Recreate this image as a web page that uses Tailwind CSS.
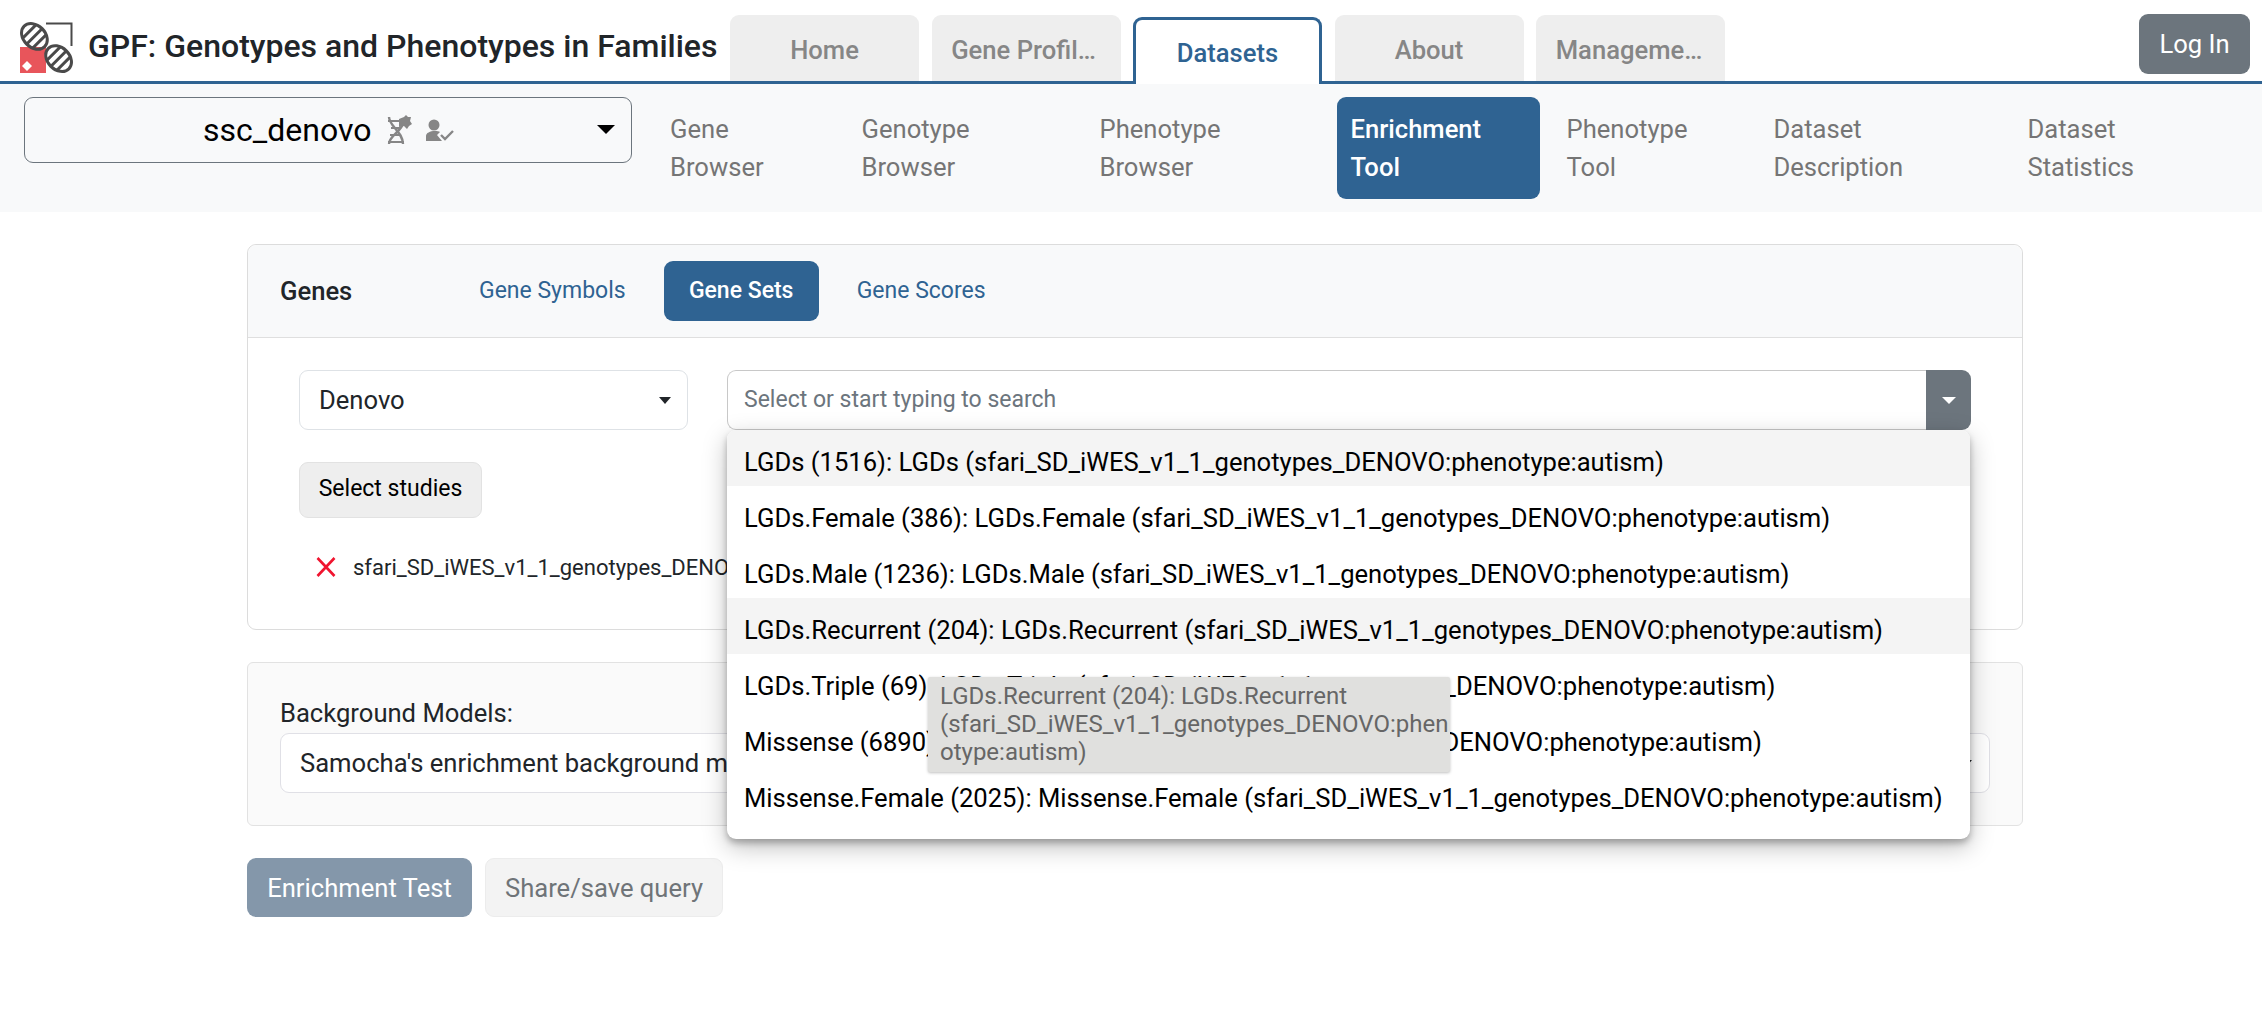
<!DOCTYPE html>
<html lang="en">
    <head>
        <meta charset="UTF-8" />
        <title>GPF: Genotypes and Phenotypes in Families</title>
        <script src="https://cdn.jsdelivr.net/npm/@tailwindcss/browser@4"></script>
    </head>
    <body class="bg-white font-['Roboto',sans-serif] text-[25.6px] text-[#212529] overflow-hidden h-[1026px]">
        <!-- top bar -->
        <header class="flex items-end h-[84px] border-b-[3px] border-[#2f6392]">
            <svg class="ml-[20px] mb-[8px] w-[53px] h-[51px] shrink-0" viewBox="0 0 53 51">
                <defs>
                    <clipPath id="lensA"><ellipse cx="14.400" cy="14.400" rx="14.500" ry="11" transform="rotate(45 14.400 14.400)" /></clipPath>
                    <clipPath id="lensB"><ellipse cx="38.600" cy="36.600" rx="14.500" ry="11" transform="rotate(45 38.600 36.600)" /></clipPath>
                </defs>
                <path d="M26 1.500h25.500V24" fill="none" stroke="#4a4a4a" stroke-width="2" />
                <rect x="0" y="25" width="26" height="26" fill="#e8555b" />
                <path d="M7 39l5 5-5 5-5-5z" fill="#fff" />
                <ellipse cx="38.600" cy="36.600" rx="15.500" ry="12" transform="rotate(45 38.600 36.600)" fill="#fff" />
                <g clip-path="url(#lensA)" stroke="#4a4a4a" stroke-width="3">
                    <path d="M-2 20.800L20.800 -2M3 25.800L25.800 3M8 30.800L30.800 8" />
                </g>
                <ellipse cx="14.400" cy="14.400" rx="14.500" ry="11" transform="rotate(45 14.400 14.400)" fill="none" stroke="#4a4a4a" stroke-width="3" />
                <g clip-path="url(#lensB)" stroke="#4a4a4a" stroke-width="3">
                    <path d="M22 43.200L43.200 22M27 48.200L48.200 27M32 53.200L53.200 32" />
                </g>
                <ellipse cx="38.600" cy="36.600" rx="14.500" ry="11" transform="rotate(45 38.600 36.600)" fill="none" stroke="#4a4a4a" stroke-width="3" />
            </svg>
            <div class="ml-[15px] w-[642px] h-[51px] mb-[10px] flex items-center text-[32px] font-medium whitespace-nowrap">GPF: Genotypes and Phenotypes in Families</div>
            <nav class="flex items-end gap-[12.5px]">
                <a class="w-[189px] h-[66px] rounded-t-[9px] bg-[#eeeeee] text-[#868686] font-medium flex items-center justify-center pt-[5px]">Home</a>
                <a class="w-[189px] h-[66px] rounded-t-[9px] bg-[#eeeeee] text-[#868686] font-medium flex items-center justify-center pt-[5px] pr-[5px]">Gene Profil…</a>
                <a class="w-[189px] h-[67px] -mb-[3px] rounded-t-[9px] bg-white border-[3px] border-b-0 border-[#2f6392] text-[#2f6392] font-medium flex items-center justify-center pt-[2px]">Datasets</a>
                <a class="w-[189px] h-[66px] rounded-t-[9px] bg-[#eeeeee] text-[#868686] font-medium flex items-center justify-center pt-[5px]">About</a>
                <a class="w-[189px] h-[66px] rounded-t-[9px] bg-[#eeeeee] text-[#868686] font-medium flex items-center justify-center pt-[5px] pr-[3px]">Manageme…</a>
            </nav>
            <button class="ml-auto mr-[12px] mb-[7px] w-[111px] h-[60px] rounded-[9px] bg-[#6c757d] text-white">Log In</button>
        </header>

        <!-- dataset bar -->
        <div class="flex items-start h-[128px] pt-[13px] bg-[#f8f9fa]">
            <div class="relative ml-[24px] w-[608px] h-[66px] rounded-[9px] border-[1.5px] border-[#6c757d] flex items-center pl-[178px]">
                <span class="text-[32px] text-black">ssc_denovo</span>
                <svg class="ml-[16px] w-[25px] h-[31px]" viewBox="0 0 25 31" fill="none" stroke="#868686" stroke-width="2.4">
                    <path d="M2 2c0 9 14 15 14 27M16 8c-1 8-14 13-14 21" />
                    <path d="M1 6h12M4 13h9M3 20h11M1 27h16" stroke-width="2" />
                    <path d="M12 4l5-2 2-2 2 2 3 0-1 4 2 3-3 2-2 3-3-3-5 1z" fill="#868686" stroke="none" />
                </svg>
                <svg class="ml-[14px] w-[28px] h-[23px]" viewBox="0 0 28 23">
                    <circle cx="8" cy="6" r="5.500" fill="#868686" />
                    <path d="M0 22v-5c0-3 4-5 9-5 2 0 4 .3 5 1l-3 3 5 6z" fill="#868686" />
                    <path d="M15 16l4 4 8-8" fill="none" stroke="#868686" stroke-width="2.400" />
                </svg>
                <span class="absolute right-[16px] top-[27px] w-0 h-0 border-x-[9px] border-x-transparent border-t-[9px] border-t-black"></span>
            </div>
            <nav class="ml-[24.5px] flex items-start leading-[38px] text-[#757575]">
                <a class="w-[191.5px] px-[13.5px] py-[13px]">Gene<br />Browser</a>
                <a class="w-[238px] px-[13.5px] py-[13px]">Genotype<br />Browser</a>
                <a class="w-[251px] px-[13.5px] py-[13px]">Phenotype<br />Browser</a>
                <a class="w-[203px] px-[13.5px] py-[13px] rounded-[9px] bg-[#2f6392] text-white font-medium">Enrichment<br />Tool</a>
                <a class="w-[207px] px-[13.5px] py-[13px] ml-[13px]">Phenotype<br />Tool</a>
                <a class="w-[254px] px-[13.5px] py-[13px]">Dataset<br />Description</a>
                <a class="w-[200px] px-[13.5px] py-[13px]">Dataset<br />Statistics</a>
            </nav>
        </div>

        <main class="ml-[247px] w-[1776px] mt-[32px]">
            <!-- genes card -->
            <section class="h-[386px] rounded-[9px] border border-[#dcdcdc]">
                <div class="flex items-center h-[93px] pl-[32px] rounded-t-[9px] bg-[#f8f9fa] border-b border-[#dfdfdf]">
                    <span class="w-[174px] font-medium text-[#212529]">Genes</span>
                    <div class="flex items-center gap-[13px] text-[23px] text-[#2f6392]">
                        <a class="h-[60px] px-[25px] flex items-center">Gene Symbols</a>
                        <a class="h-[60px] w-[155px] justify-center flex items-center rounded-[9px] bg-[#2f6392] text-white font-medium">Gene Sets</a>
                        <a class="h-[60px] px-[25px] flex items-center">Gene Scores</a>
                    </div>
                </div>
                <div class="pl-[51px] pt-[32px]">
                    <div class="flex items-start">
                        <div class="relative w-[389px] h-[60px] rounded-[9px] border border-[#dee2e6] flex items-center pl-[19px]">
                            Denovo
                            <span class="absolute right-[16px] top-[26px] w-0 h-0 border-x-[6px] border-x-transparent border-t-[7px] border-t-[#212529]"></span>
                        </div>
                        <div class="relative ml-[39px] flex w-[1244px] h-[60px]">
                            <div class="flex-1 rounded-l-[9px] border border-r-0 border-[#c8c8c8] flex items-center pl-[16px] pt-[1px] text-[23px] text-[#6c757d]">Select or start typing to search</div>
                            <div class="w-[45px] rounded-r-[9px] bg-[#6c757d] flex items-center justify-center">
                                <span class="w-0 h-0 border-x-[7px] border-x-transparent border-t-[7px] border-t-white"></span>
                            </div>

                            <!-- open dropdown -->
                            <ul class="absolute z-10 left-0 top-full w-[1243px] h-[409px] rounded-[9px] bg-white text-black shadow-[0_4px_6px_rgba(0,0,0,.25),0_8px_24px_rgba(0,0,0,.25)]">
                                <li class="h-[56px] pl-[17px] pt-[9px] flex items-center rounded-t-[9px] bg-[#f4f4f4]">LGDs (1516): LGDs (sfari_SD_iWES_v1_1_genotypes_DENOVO:phenotype:autism)</li>
                                <li class="h-[56px] pl-[17px] pt-[9px] flex items-center">LGDs.Female (386): LGDs.Female (sfari_SD_iWES_v1_1_genotypes_DENOVO:phenotype:autism)</li>
                                <li class="h-[56px] pl-[17px] pt-[9px] flex items-center">LGDs.Male (1236): LGDs.Male (sfari_SD_iWES_v1_1_genotypes_DENOVO:phenotype:autism)</li>
                                <li class="h-[56px] pl-[17px] pt-[9px] flex items-center bg-[#f4f4f4]">LGDs.Recurrent (204): LGDs.Recurrent (sfari_SD_iWES_v1_1_genotypes_DENOVO:phenotype:autism)</li>
                                <li class="h-[56px] pl-[17px] pt-[9px] flex items-center">LGDs.Triple (69): LGDs.Triple (sfari_SD_iWES_v1_1_genotypes_DENOVO:phenotype:autism)</li>
                                <li class="h-[56px] pl-[17px] pt-[9px] flex items-center">Missense (6890): Missense (sfari_SD_iWES_v1_1_genotypes_DENOVO:phenotype:autism)</li>
                                <li class="h-[56px] pl-[17px] pt-[9px] flex items-center">Missense.Female (2025): Missense.Female (sfari_SD_iWES_v1_1_genotypes_DENOVO:phenotype:autism)</li>
                                <div class="absolute z-20 left-[201px] top-[247px] w-[522px] h-[95px] pl-[12px] pt-[5px] bg-[#e0e0de] rounded-[2px] text-[24px] leading-[28px] text-[#666666] shadow-[0_1px_3px_rgba(0,0,0,.25)] whitespace-nowrap">
                                    LGDs.Recurrent (204): LGDs.Recurrent<br />(sfari_SD_iWES_v1_1_genotypes_DENOVO:phen<br />otype:autism)
                                </div>
                            </ul>
                        </div>
                    </div>
                    <button class="mt-[32px] block w-[183px] h-[56px] pb-[2px] rounded-[9px] bg-[#eeeeee] border border-[#e2e2e2] text-[23px] text-black">Select studies</button>
                    <div class="mt-[37px] flex items-center h-[24px] whitespace-nowrap text-[22px]">
                        <svg class="ml-[17px] w-[20px] h-[20px]" viewBox="0 0 20 20"><path d="M1.5 1l17 18M18.5 1l-17 18" stroke="#f0142f" stroke-width="2.6" fill="none" /></svg>
                        <span class="ml-[17px]">sfari_SD_iWES_v1_1_genotypes_DENOVO</span>
                    </div>
                </div>
            </section>

            <!-- background models card -->
            <section class="mt-[32px] h-[164px] rounded-[6px] border border-[#e2e2e2] bg-[#fafafa] px-[32px] pt-[32px]">
                <div class="h-[36px] leading-[36px] mb-[2px]">Background Models:</div>
                <div class="relative h-[60px] rounded-[9px] border border-[#e0e0e6] bg-white flex items-center pl-[19px]">
                    Samocha's enrichment background model
                    <span class="absolute right-[17px] top-[26px] w-0 h-0 border-x-[6px] border-x-transparent border-t-[7px] border-t-[#212529]"></span>
                </div>
            </section>

            <div class="mt-[32px] flex gap-[13px]">
                <button class="w-[225px] h-[59px] pt-[2px] rounded-[9px] bg-[#8497aa] text-white">Enrichment Test</button>
                <button class="w-[238px] h-[59px] pt-[2px] rounded-[9px] bg-[#f3f3f3] border border-[#ececec] text-[#6f7478]">Share/save query</button>
            </div>
        </main>
    </body>
</html>
